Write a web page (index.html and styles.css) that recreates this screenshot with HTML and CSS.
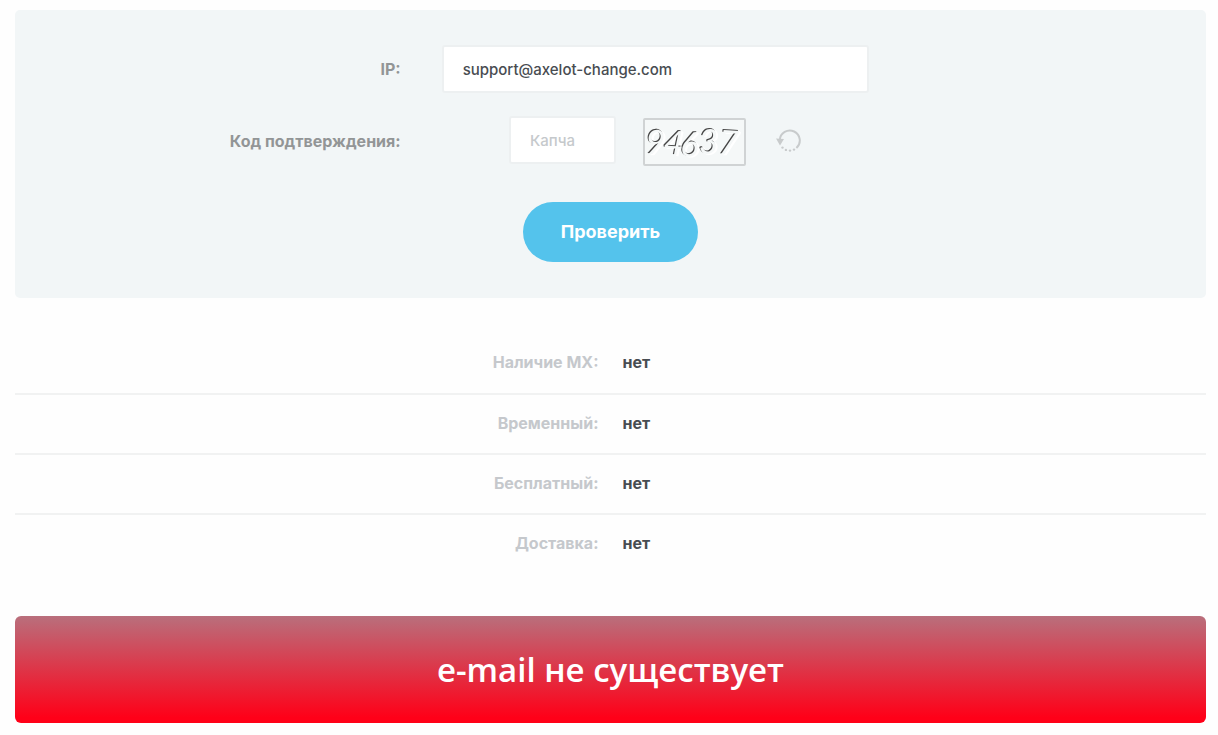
FILE: index.html
```html
<!DOCTYPE html>
<html lang="ru">
<head>
<meta charset="utf-8">
<meta name="viewport" content="width=device-width, initial-scale=1">
<title>Проверка e-mail</title>
<link rel="stylesheet" href="styles.css">
</head>
<body>
<main class="page">
  <form class="panel">
    <div class="field">
      <label class="field-label" for="address">IP:</label>
      <input class="input" id="address" type="text" value="support@axelot-change.com">
    </div>
    <div class="field">
      <label class="field-label" for="captcha">Код подтверждения:</label>
      <div class="captcha">
        <input class="input input-code" id="captcha" type="text" placeholder="Капча">
        <svg class="captcha-image" viewBox="0 0 103 48" role="img" aria-label="Капча">
          <rect class="captcha-frame" x="1" y="1" width="101" height="46" rx="1"/>
          <text class="captcha-digits" x="2 20 37 56 75" y="36 36 38 36 36" rotate="2 5 2 -2 4">94637</text>
        </svg>
        <button class="refresh" type="button" aria-label="Обновить">
          <svg class="refresh-icon" viewBox="0 0 26 24">
            <path class="refresh-arc" d="M3.8 11A10 10 0 1 1 20.4 19"/>
            <path class="refresh-head" d="M0 9.5L8 10L4 16.5Z"/>
            <circle class="refresh-dot" cx="6.5" cy="18.6" r="1.2"/>
            <circle class="refresh-dot" cx="9.9" cy="20.9" r="1.2"/>
            <circle class="refresh-dot" cx="14" cy="21.6" r="1.2"/>
            <circle class="refresh-dot" cx="18" cy="20.6" r="1.2"/>
          </svg>
        </button>
      </div>
    </div>
    <button class="submit" type="submit">Проверить</button>
  </form>
  <dl class="results">
    <div class="result"><dt class="result-name">Наличие MX:</dt><dd class="result-value">нет</dd></div>
    <div class="result"><dt class="result-name">Временный:</dt><dd class="result-value">нет</dd></div>
    <div class="result"><dt class="result-name">Бесплатный:</dt><dd class="result-value">нет</dd></div>
    <div class="result"><dt class="result-name">Доставка:</dt><dd class="result-value">нет</dd></div>
  </dl>
  <p class="verdict">e-mail не существует</p>
</main>
</body>
</html>
```

FILE: styles.css
```css
* { box-sizing: border-box; }
body {
  margin: 0;
  background: #fefefe;
  color: #484c51;
  font-family: "Open Sans", "Liberation Sans", sans-serif;
  font-size: 16px;
}
.page { padding: 10px 12px 11px 15px; }
.panel {
  display: flex;
  flex-direction: column;
  padding: 35px 0 36px;
  border-radius: 5px;
  background: #f2f6f7;
}
.field {
  display: grid;
  grid-template-columns: 386fr 428fr 296fr;
  column-gap: 41px;
  align-items: center;
  margin-bottom: 23px;
}
.field-label {
  padding-bottom: 1px;
  color: #929596;
  font-family: Inter, "Liberation Sans", sans-serif;
  font-weight: 700;
  text-align: right;
}
.input {
  width: 100%;
  height: 48px;
  padding: 0 19px;
  border: 2px solid #edf0f1;
  border-radius: 3px;
  background: #fff;
  color: #484c51;
  font-family: Inter, "Liberation Sans", sans-serif;
  font-size: 15px;
  font-weight: 500;
}
.input::placeholder { color: #c5c9cc; opacity: 1; }
.captcha {
  display: flex;
  align-items: flex-start;
  justify-content: center;
}
.input-code { width: 107px; }
.captcha-image {
  width: 103px;
  height: 48px;
  margin: 2px 30px 0 27px;
}
.captcha-frame { fill: #f5f8f8; stroke: #d0d3d4; stroke-width: 2; }
.captcha-digits {
  fill: #f5f8f8;
  font-family: Lato, sans-serif;
  font-size: 34px;
  font-style: italic;
  font-weight: 400;
  filter: drop-shadow(-1px -1px 0 #444) drop-shadow(2px 1px 0 #fff);
}
.refresh {
  display: flex;
  align-self: center;
  padding: 0;
  border: 0;
  background: none;
  cursor: pointer;
}
.refresh-icon { width: 26px; height: 24px; }
.refresh-arc { fill: none; stroke: #c8cbcc; stroke-width: 2; }
.refresh-head, .refresh-dot { fill: #c8cbcc; }
.submit {
  align-self: center;
  height: 60px;
  margin-top: 13px;
  padding: 0 38px 2px;
  border: 0;
  border-radius: 30px;
  background: #54c3ec;
  color: #fff;
  font-family: Inter, "Liberation Sans", sans-serif;
  font-size: 18px;
  font-weight: 700;
  cursor: pointer;
}
.results { margin: 35px 0 43px; }
.result {
  display: grid;
  grid-template-columns: 1fr 1fr;
  column-gap: 24px;
  align-items: center;
  height: 60px;
  padding-bottom: 2px;
  font-family: Inter, "Liberation Sans", sans-serif;
  font-weight: 700;
}
.result + .result { border-top: 2px solid #f1f2f2; }
.result-name { color: #c5c8cc; text-align: right; }
.result-value { margin: 0; }
.verdict {
  margin: 0;
  padding: 32px 20px 31px;
  border-radius: 6px;
  background: linear-gradient(#b96f7c, #ff0018 95%);
  color: #fff;
  font-family: "Open Sans", "Liberation Sans", sans-serif;
  font-size: 33px;
  font-weight: 600;
  line-height: 44px;
  text-align: center;
}
```
